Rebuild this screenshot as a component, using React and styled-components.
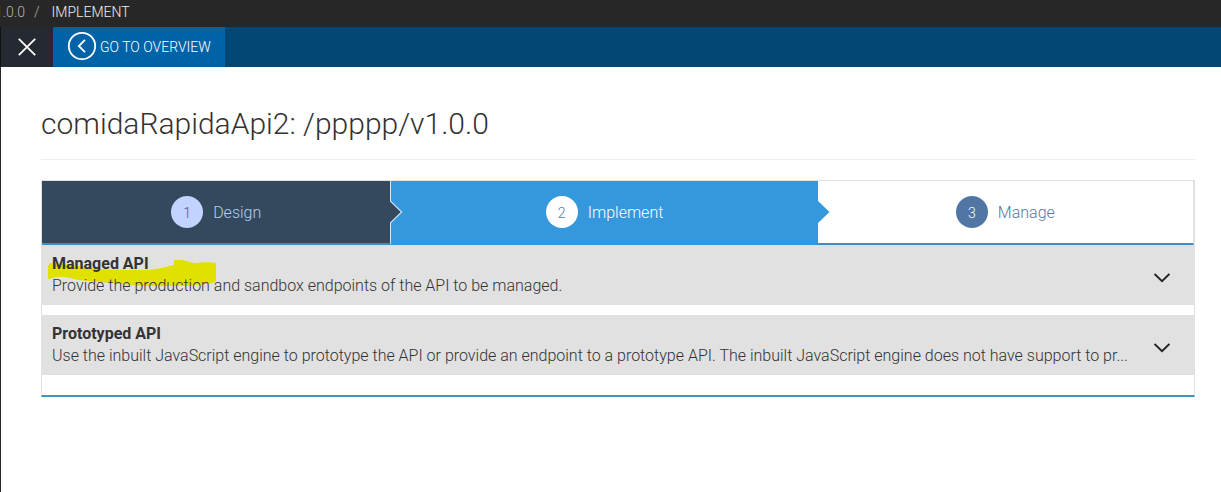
import React from "react";
import styled, { createGlobalStyle } from "styled-components";

const GlobalStyle = createGlobalStyle`
  * { box-sizing: border-box; }
  body {
    margin: 0;
    background: #fff;
    color: #333;
    font-family: Roboto, "Liberation Sans", sans-serif;
    font-size: 16px;
    font-weight: 300;
    line-height: 22px;
  }
`;

const Page = styled.div`
  display: flex;
  flex-direction: column;
  min-height: 100vh;
`;

const Breadcrumb = styled.nav`
  height: 27px;
  padding-bottom: 3px;
  background: #272727;
  overflow: hidden;
`;

const Trail = styled.ol`
  display: flex;
  gap: 9px;
  margin: 0 0 0 -5px;
  padding: 0;
  list-style: none;
  font-size: 14px;
  line-height: 24px;
  color: #b4b4b4;
`;

const Crumb = styled.a`
  color: ${(p) => (p.$current ? "#f0f0f0" : "#b4b4b4")};
  text-decoration: none;
  margin-left: ${(p) => (p.$current ? "3px" : "0")};
`;

const ActionBar = styled.header`
  display: flex;
  height: 40px;
  background: #004775;
`;

const CloseButton = styled.button`
  display: flex;
  align-items: center;
  justify-content: center;
  width: 53px;
  padding: 0;
  border: 0;
  border-left: 1px solid #111;
  background: #242932;
`;

const OverviewLink = styled.a`
  display: flex;
  align-items: center;
  gap: 3px;
  padding: 0 14px;
  background: #0063a8;
  color: #fff;
  font-size: 14px;
  text-decoration: none;
  svg { margin-top: -3px; }
`;

const Main = styled.main`
  flex: 1;
  padding: 40px 26px 40px 40px;
  border-left: 1px solid #272727;
`;

const Title = styled.h1`
  margin: 0 0 20px;
  padding-bottom: 18px;
  border-bottom: 1px solid #eee;
  font-size: 30px;
  font-weight: 300;
  line-height: 34px;
`;

const Wizard = styled.section`
  border: 1px solid #e1e1e1;
  border-bottom: 2px solid #3f95bd;
  padding-bottom: 20px;
`;

const Steps = styled.ol`
  display: flex;
  height: 64px;
  margin: 0;
  padding: 0;
  list-style: none;
`;

const tones = {
  done: { bg: "#34495e", text: "#b5cdf0", disc: "#c3d3ff", num: "#4a5f80", line: "#3f8dc0", edge: "1px solid #d5e8f5" },
  active: { bg: "#3598dc", text: "#fff", disc: "#fff", num: "#5878a0", line: "#3598dc", edge: "0" },
  next: { bg: "#fff", text: "#5578a5", disc: "#5276a4", num: "#fff", line: "#3f8dc0", edge: "1px solid #e1e1e1" },
};

const Step = styled.li`
  position: relative;
  display: flex;
  flex: ${(p) => p.$share} 1 0;
  background: ${(p) => tones[p.$tone].bg};
  border-bottom: 2px solid ${(p) => tones[p.$tone].line};
  border-right: ${(p) => tones[p.$tone].edge};
`;

const StepLink = styled.a`
  display: flex;
  flex: 1;
  align-items: center;
  justify-content: center;
  gap: 10px;
  color: ${(p) => tones[p.$tone].text};
  text-decoration: none;
`;

const StepNumber = styled.span`
  display: flex;
  align-items: center;
  justify-content: center;
  width: 32px;
  height: 32px;
  padding-top: 2px;
  border-radius: 50%;
  background: ${(p) => tones[p.$tone].disc};
  color: ${(p) => tones[p.$tone].num};
  font-size: 14px;
`;

const StepLabel = styled.span`
  padding-top: 2px;
`;

const StepArrow = styled.svg`
  position: absolute;
  z-index: 1;
  left: 100%;
  top: 19px;
`;

const Options = styled.div`
  display: flex;
  flex-direction: column;
  gap: 10px;
`;

const Option = styled.button`
  position: relative;
  display: flex;
  align-items: center;
  gap: 24px;
  width: 100%;
  height: 60px;
  padding: 0 24px 0 10px;
  border: 0;
  background: #e1e1e1;
  color: #333;
  font: inherit;
  text-align: left;
`;

const OptionText = styled.span`
  position: relative;
  flex: 1;
  min-width: 0;
`;

const OptionName = styled.strong`
  display: block;
  font-weight: 700;
`;

const OptionHint = styled.span`
  display: block;
  overflow: hidden;
  white-space: nowrap;
  text-overflow: ellipsis;
`;

const Chevron = styled.svg`
  flex: none;
  margin-top: 6px;
`;

const Highlight = styled.svg`
  position: absolute;
  left: 6px;
  top: 14px;
`;

const steps = [
  { label: "Design", tone: "done", share: 349 },
  { label: "Implement", tone: "active", share: 427 },
  { label: "Manage", tone: "next", share: 376 },
];

const options = [
  {
    name: "Managed API",
    hint: "Provide the production and sandbox endpoints of the API to be managed.",
    marked: true,
  },
  {
    name: "Prototyped API",
    hint: "Use the inbuilt JavaScript engine to prototype the API or provide an endpoint to a prototype API. The inbuilt JavaScript engine does not have support to pr...",
  },
];

export default function App() {
  return (
    <Page>
      <GlobalStyle />
      <Breadcrumb aria-label="Breadcrumb">
        <Trail>
          <li><Crumb href="#version">1.0.0</Crumb></li>
          <li aria-hidden="true">/</li>
          <li><Crumb href="#implement" $current>IMPLEMENT</Crumb></li>
        </Trail>
      </Breadcrumb>
      <ActionBar>
        <CloseButton type="button" aria-label="Close">
          <svg width="18" height="18" viewBox="0 0 18 18" fill="none" stroke="#fff" strokeWidth="1.8">
            <path d="M.8.8l16.4 16.4M17.2.8L.8 17.2" />
          </svg>
        </CloseButton>
        <OverviewLink href="#overview">
          <svg width="30" height="30" viewBox="0 0 30 30" fill="none" stroke="#fff" strokeWidth="1.8">
            <circle cx="15" cy="15" r="13.2" />
            <path d="M18 8.8L11.8 15l6.2 6.2" />
          </svg>
          GO TO OVERVIEW
        </OverviewLink>
      </ActionBar>
      <Main>
        <Title>comidaRapidaApi2: /ppppp/v1.0.0</Title>
        <Wizard>
          <Steps>
            {steps.map((step, i) => (
              <Step key={step.label} $tone={step.tone} $share={step.share}>
                <StepLink href={"#" + step.label.toLowerCase()} $tone={step.tone}>
                  <StepNumber $tone={step.tone}>{i + 1}</StepNumber>
                  <StepLabel>{step.label}</StepLabel>
                </StepLink>
                {step.tone !== "next" && (
                  <StepArrow width="13" height="24" viewBox="0 0 13 24" aria-hidden="true">
                    {step.tone === "done" && <path d="M0 0l12.5 12L0 24z" fill="#d5e8f5" />}
                    <path
                      d={step.tone === "done" ? "M-1 .5L10.8 12-1 23.5z" : "M0 1l11.5 11L0 23z"}
                      fill={tones[step.tone].bg}
                    />
                  </StepArrow>
                )}
              </Step>
            ))}
          </Steps>
          <Options>
            {options.map((option) => (
              <Option type="button" key={option.name} aria-expanded="false">
                {option.marked && (
                  <Highlight width="169" height="28" viewBox="0 0 169 28" aria-hidden="true">
                    <path
                      d="M0 7C2 3 5 3 8 4l37 5c14 2 35 2 55 2 12-1 16-3 26-5V1h9c5 1 8 3 14 3 7-1 12-1 19 0v18c-2 2-5 2-9 3l-19 2H92c-20-2-40-4-62-6-8-2-13-4-21-3L0 20z"
                      fill="#e1e100"
                    />
                  </Highlight>
                )}
                <OptionText>
                  <OptionName>{option.name}</OptionName>
                  <OptionHint>{option.hint}</OptionHint>
                </OptionText>
                <Chevron width="16" height="10" viewBox="0 0 16 10" fill="none" stroke="#222" strokeWidth="1.8" aria-hidden="true">
                  <path d="M.6 1L8 8.2 15.4 1" />
                </Chevron>
              </Option>
            ))}
          </Options>
        </Wizard>
      </Main>
    </Page>
  );
}
